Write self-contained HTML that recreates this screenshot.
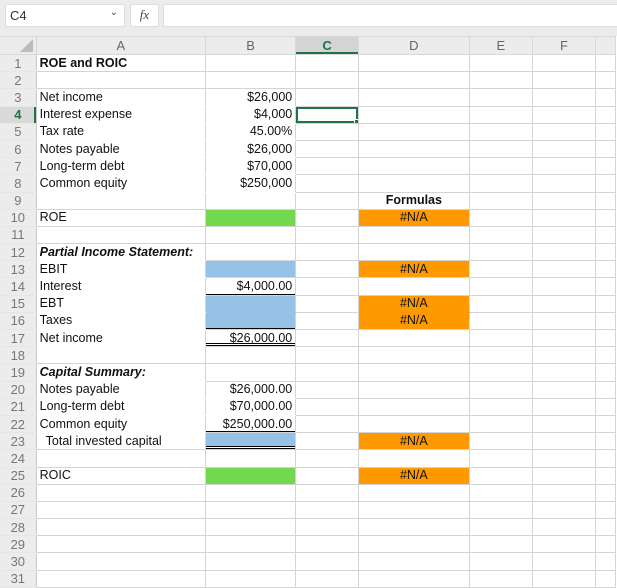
<!DOCTYPE html>
<html><head><style>
*{margin:0;padding:0;box-sizing:border-box}
body{width:617px;height:586px;overflow:hidden;background:#fff;font-family:"Liberation Sans",Arial,sans-serif;position:relative}
#top{position:absolute;left:0;top:0;width:617px;height:36px;background:#ececec}
.box{position:absolute;background:#fff;border:1px solid #ddd;border-radius:2px}
table{position:absolute;left:-1px;top:36px;border-collapse:collapse;table-layout:fixed}
td{border:1px solid #d4d4d4;height:17.2px;font-size:12.5px;color:#111;padding:0 3px;white-space:nowrap;overflow:hidden;line-height:15px}
tr.h td{height:18px;background:#ececec;color:#666;text-align:center;font-size:13px;border-color:#d8d8d8}
td.rh{background:#ececec;color:#777;text-align:center;font-size:13px;border-color:#e6e6e6 #c8c8c8 #e6e6e6 #ececec;padding:0}
.r{text-align:right}.c{text-align:center}.b{font-weight:bold}.bi{font-weight:bold;font-style:italic}
.nl td.a,.nl td.bb{border-top-color:#fff;border-bottom-color:#fff}
.g{background:#74d84f}.bl{background:#96c2e8}.o{background:#ff9900}
.ub{box-shadow:inset 0 -1px #000}
.ud{box-shadow:inset 0 -1px #000,inset 0 -2px #fff,inset 0 -3px #000}
</style></head><body>
<div id="top">
<div class="box" style="left:5px;top:4px;width:120px;height:23px;font-size:13px;color:#333;padding:3px 4px">C4<span style="position:absolute;right:6px;top:2px;font-size:10px;color:#555">&#8964;</span></div>
<div class="box" style="left:130px;top:4px;width:29px;height:23px;font-family:'Liberation Serif',serif;font-style:italic;font-size:13px;color:#444;text-align:center;padding-top:2px">fx</div>
<div class="box" style="left:163px;top:4px;width:460px;height:23px"></div>
</div>
<table>
<colgroup><col style="width:37px"><col style="width:169.5px"><col style="width:90.5px"><col style="width:63.5px"><col style="width:111.5px"><col style="width:64px"><col style="width:64px"><col style="width:20px"></colgroup>
<tr class="h"><td style="position:relative"><div style="position:absolute;right:3px;bottom:2px;width:0;height:0;border-left:13px solid transparent;border-bottom:13px solid #bbb"></div></td><td>A</td><td>B</td><td style="background:#d4d4d4;color:#217346;font-weight:bold;box-shadow:inset 0 -2px #217346">C</td><td>D</td><td>E</td><td>F</td><td></td></tr>
<tr><td class="rh">1</td><td class="a b">ROE and ROIC</td><td></td><td></td><td></td><td></td><td></td><td></td></tr>
<tr><td class="rh">2</td><td></td><td></td><td></td><td></td><td></td><td></td><td></td></tr>
<tr class="nl"><td class="rh">3</td><td class="a">Net income</td><td class="bb r">$26,000</td><td></td><td></td><td></td><td></td><td></td></tr>
<tr class="nl"><td class="rh" style="background:#d9d9d9;color:#217346;font-weight:bold;box-shadow:inset -2px 0 #217346">4</td><td class="a">Interest expense</td><td class="bb r">$4,000</td><td style="box-shadow:inset 0 0 0 2px #217346;position:relative"><div style="position:absolute;right:-1px;bottom:-1px;width:5px;height:5px;background:#217346;border:1px solid #fff"></div></td><td></td><td></td><td></td><td></td></tr>
<tr class="nl"><td class="rh">5</td><td class="a">Tax rate</td><td class="bb r">45.00%</td><td></td><td></td><td></td><td></td><td></td></tr>
<tr class="nl"><td class="rh">6</td><td class="a">Notes payable</td><td class="bb r">$26,000</td><td></td><td></td><td></td><td></td><td></td></tr>
<tr class="nl"><td class="rh">7</td><td class="a">Long-term debt</td><td class="bb r">$70,000</td><td></td><td></td><td></td><td></td><td></td></tr>
<tr class="nl"><td class="rh">8</td><td class="a">Common equity</td><td class="bb r">$250,000</td><td></td><td></td><td></td><td></td><td></td></tr>
<tr><td class="rh">9</td><td></td><td></td><td></td><td class="c b">Formulas</td><td></td><td></td><td></td></tr>
<tr><td class="rh">10</td><td>ROE</td><td class="g"></td><td></td><td class="o c">#N/A</td><td></td><td></td><td></td></tr>
<tr><td class="rh">11</td><td></td><td></td><td></td><td></td><td></td><td></td><td></td></tr>
<tr class="nl"><td class="rh">12</td><td class="a bi">Partial Income Statement:</td><td></td><td></td><td></td><td></td><td></td><td></td></tr>
<tr class="nl"><td class="rh">13</td><td class="a">EBIT</td><td class="bl"></td><td></td><td class="o c">#N/A</td><td></td><td></td><td></td></tr>
<tr class="nl"><td class="rh">14</td><td class="a">Interest</td><td class="r ub">$4,000.00</td><td></td><td></td><td></td><td></td><td></td></tr>
<tr class="nl"><td class="rh">15</td><td class="a">EBT</td><td class="bl" style="border-bottom-color:#96c2e8"></td><td></td><td class="o c" style="border-bottom-color:#ff9900">#N/A</td><td></td><td></td><td></td></tr>
<tr class="nl"><td class="rh">16</td><td class="a">Taxes</td><td class="bl ub"></td><td></td><td class="o c">#N/A</td><td></td><td></td><td></td></tr>
<tr class="nl"><td class="rh">17</td><td class="a">Net income</td><td class="r ud">$26,000.00</td><td></td><td></td><td></td><td></td><td></td></tr>
<tr><td class="rh">18</td><td></td><td></td><td></td><td></td><td></td><td></td><td></td></tr>
<tr class="nl"><td class="rh">19</td><td class="a bi">Capital Summary:</td><td></td><td></td><td></td><td></td><td></td><td></td></tr>
<tr class="nl"><td class="rh">20</td><td class="a">Notes payable</td><td class="bb r">$26,000.00</td><td></td><td></td><td></td><td></td><td></td></tr>
<tr class="nl"><td class="rh">21</td><td class="a">Long-term debt</td><td class="bb r">$70,000.00</td><td></td><td></td><td></td><td></td><td></td></tr>
<tr class="nl"><td class="rh">22</td><td class="a">Common equity</td><td class="r ub" style="border-top-color:#fff">$250,000.00</td><td></td><td></td><td></td><td></td><td></td></tr>
<tr><td class="rh">23</td><td style="padding-left:9px;border-top-color:#fff">Total invested capital</td><td class="bl ud"></td><td></td><td class="o c">#N/A</td><td></td><td></td><td></td></tr>
<tr><td class="rh">24</td><td></td><td></td><td></td><td></td><td></td><td></td><td></td></tr>
<tr><td class="rh">25</td><td>ROIC</td><td class="g"></td><td></td><td class="o c">#N/A</td><td></td><td></td><td></td></tr>
<tr><td class="rh">26</td><td></td><td></td><td></td><td></td><td></td><td></td><td></td></tr>
<tr><td class="rh">27</td><td></td><td></td><td></td><td></td><td></td><td></td><td></td></tr>
<tr><td class="rh">28</td><td></td><td></td><td></td><td></td><td></td><td></td><td></td></tr>
<tr><td class="rh">29</td><td></td><td></td><td></td><td></td><td></td><td></td><td></td></tr>
<tr><td class="rh">30</td><td></td><td></td><td></td><td></td><td></td><td></td><td></td></tr>
<tr><td class="rh">31</td><td></td><td></td><td></td><td></td><td></td><td></td><td></td></tr>
</table>
</body></html>
